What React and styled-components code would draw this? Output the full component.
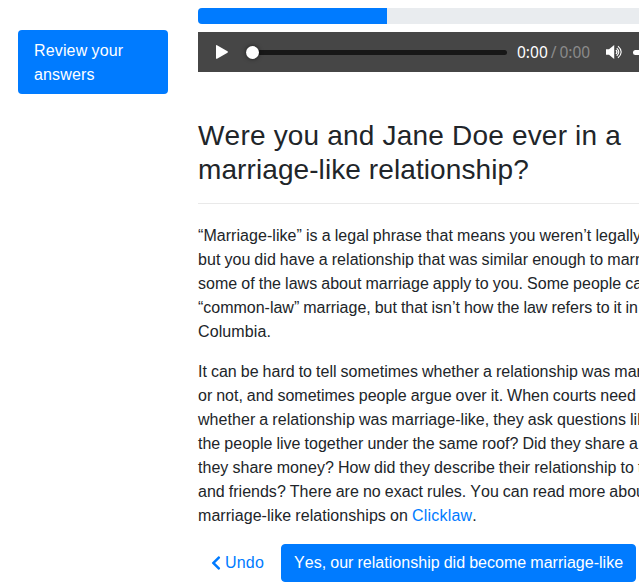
import React from "react";
import styled, { createGlobalStyle } from "styled-components";

const GlobalStyle = createGlobalStyle`
  *, *::before, *::after { box-sizing: border-box; }
  html, body { margin: 0; overflow: hidden; background: #fff; }
  body {
    font-family: "Liberation Sans", Arial, sans-serif;
    font-size: 16px;
    font-kerning: none;
    line-height: 1.5;
    word-spacing: -0.445px;
    color: #212529;
  }
`;

const Page = styled.div`
  display: flex;
  align-items: flex-start;
  gap: 30px;
  height: 585px;
  padding: 8px 0 0 18px;
  overflow: hidden;
`;

const Sidebar = styled.nav`
  flex: 0 0 150px;
  padding-top: 22px;
`;

const NavPill = styled.a`
  display: block;
  padding: 9px 16px 7px;
  border-radius: 4px;
  background: #007bff;
  color: #fff;
  letter-spacing: 0.15px;
  text-decoration: none;
`;

const Main = styled.main`
  flex: 0 0 510px;
`;

const Progress = styled.div`
  height: 16px;
  margin-bottom: 8px;
  border-radius: 4px;
  background: #e9ecef;
  overflow: hidden;
`;

const ProgressBar = styled.div`
  width: 189px;
  height: 100%;
  background: #007bff;
`;

const Player = styled.div`
  display: flex;
  align-items: center;
  height: 40px;
  padding-left: 18px;
  background: #464646;
  color: #fff;
`;

const PlayIcon = styled.svg`
  flex: none;
  width: 12px;
  height: 14px;
`;

const SeekBar = styled.div`
  display: flex;
  align-items: center;
  flex: 0 0 261px;
  height: 5px;
  margin: 1px 10px 0 18px;
  border-radius: 3px;
  background: #171717;
`;

const Thumb = styled.span`
  width: 13px;
  height: 13px;
  border-radius: 50%;
  background: #fff;
  box-shadow: 0 0 4px rgba(0, 0, 0, 0.6);
`;

const Time = styled.div`
  flex: 0 0 72px;
  font: 400 15.5px/20px "Noto Sans", "Open Sans", sans-serif;
  white-space: pre;
  word-spacing: -1.1px;
  color: #8b8b8b;
  padding-bottom: 1px;
`;

const Elapsed = styled.span`
  color: #fff;
`;

const VolumeIcon = styled.svg`
  flex: none;
  width: 17px;
  height: 14px;
  margin-left: 16px;
`;

const VolumeBar = styled.div`
  flex: 0 0 60px;
  height: 5px;
  margin: 1px 0 0 10px;
  border-radius: 3px;
  background: #fff;
`;

const Heading = styled.h1`
  margin: 47px 0 0;
  padding-bottom: 16px;
  border-bottom: 1px solid #e9e9e9;
  font-size: 28px;
  font-weight: 400;
  line-height: 34px;
  word-spacing: 0;
`;

const Paragraph = styled.p`
  margin: 20px 0 16px;
  white-space: nowrap;

  & + & {
    margin-top: 0;
  }
`;

const Line = styled.span`
  display: block;
  letter-spacing: ${(p) => p.$tracking}px;
`;

const Link = styled.a`
  color: #007bff;
  letter-spacing: 0.2px;
  text-decoration: none;
`;

const Actions = styled.div`
  display: flex;
  gap: 4px;
`;

const Button = styled.button`
  display: flex;
  align-items: center;
  height: 38px;
  padding: 0 12px;
  border: 1px solid ${(p) => (p.$primary ? "#007bff" : "transparent")};
  border-radius: 4px;
  background: ${(p) => (p.$primary ? "#007bff" : "transparent")};
  color: ${(p) => (p.$primary ? "#fff" : "#007bff")};
  font: inherit;
  font-kerning: none;
  word-spacing: inherit;
  letter-spacing: ${(p) => (p.$primary ? "0.03px" : "0.2px")};
  white-space: nowrap;
`;

const ChevronIcon = styled.svg`
  width: 10px;
  height: 16px;
  margin-right: 4px;
`;

const DEFINITION = [
  ["“Marriage-like” is a legal phrase that means you weren’t legally married,", 0.053],
  ["but you did have a relationship that was similar enough to marriage that", 0.04],
  ["some of the laws about marriage apply to you. Some people call this", 0.03],
  ["“common-law” marriage, but that isn’t how the law refers to it in British", -0.01],
  ["Columbia.", 0.1],
];

const GUIDANCE = [
  ["It can be hard to tell sometimes whether a relationship was marriage-like", 0.01],
  ["or not, and sometimes people argue over it. When courts need to decide", -0.01],
  ["whether a relationship was marriage-like, they ask questions like: did", 0.055],
  ["the people live together under the same roof? Did they share a bed? Did", 0.015],
  ["they share money? How did they describe their relationship to their family", 0.04],
  ["and friends? There are no exact rules. You can read more about", 0.015],
];

function Lines({ lines }) {
  return lines.map(([text, tracking]) => (
    <Line key={text} $tracking={tracking}>
      {text}
    </Line>
  ));
}

export default function App() {
  return (
    <>
      <GlobalStyle />
      <Page>
        <Sidebar>
          <NavPill>Review your answers</NavPill>
        </Sidebar>
        <Main>
          <Progress>
            <ProgressBar />
          </Progress>
          <Player>
            <PlayIcon viewBox="0 0 12 14" fill="#fff">
              <path d="M0 0.8Q0-.3 1 .3L11.5 6.3Q12.3 7 11.5 7.7L1 13.7Q0 14.2 0 13.2Z" />
            </PlayIcon>
            <SeekBar>
              <Thumb />
            </SeekBar>
            <Time>
              <Elapsed>0:00</Elapsed> / 0:00
            </Time>
            <VolumeIcon viewBox="0 0 17 14" fill="none" stroke="#fff">
              <path d="M0 4.2H3L8.2 0V14L3 9.8H0Z" fill="#fff" stroke="none" />
              <path d="M10 5Q12 7 10 9" strokeWidth="1.2" />
              <path d="M10.8 3.1Q14.8 7 10.8 10.9" strokeWidth="1.1" />
              <path d="M12 1.2Q18.4 7 12 12.8" strokeWidth="1.1" />
            </VolumeIcon>
            <VolumeBar />
          </Player>
          <Heading>
            <Line $tracking={0.19}>Were you and Jane Doe ever in a</Line>
            <Line $tracking={0.09}>marriage-like relationship?</Line>
          </Heading>
          <Paragraph>
            <Lines lines={DEFINITION} />
          </Paragraph>
          <Paragraph>
            <Lines lines={GUIDANCE} />
            <Line $tracking={0.06}>
              marriage-like relationships on <Link>Clicklaw</Link>.
            </Line>
          </Paragraph>
          <Actions>
            <Button>
              <ChevronIcon viewBox="0 0 320 512" fill="currentColor">
                <path d="M34.52 239.03 228.87 44.69c9.37-9.37 24.57-9.37 33.94 0l22.67 22.67c9.36 9.36 9.37 24.52.04 33.9L131.49 256l154.02 154.75c9.34 9.38 9.32 24.54-.04 33.9l-22.67 22.67c-9.37 9.37-24.57 9.37-33.94 0L34.52 272.97c-9.37-9.37-9.37-24.57 0-33.94z" />
              </ChevronIcon>
              Undo
            </Button>
            <Button $primary>Yes, our relationship did become marriage-like</Button>
          </Actions>
        </Main>
      </Page>
    </>
  );
}
